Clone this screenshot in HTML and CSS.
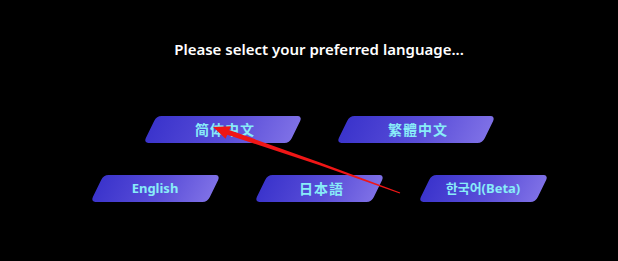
FILE: index.html
```html
<!DOCTYPE html>
<html>
<head>
<meta charset="utf-8">
<link rel="stylesheet" href="styles.css">
</head>
<body>
<div class="page">
	<div class="title">Please select your preferred language...</div>
	<div class="row">
		<div class="lang wide zh">简体中文</div>
		<div class="lang wide zh">繁體中文</div>
	</div>
	<div class="row second">
		<div class="lang">English</div>
		<div class="lang zh">日本語</div>
		<div class="lang">한국어(Beta)</div>
	</div>
	<svg class="arrow" width="618" height="261" viewBox="0 0 618 261">
		<polygon points="213,127 231,126.2 229.2,130 320,162.6 400.2,192.6 399.8,193.4 319,165 227.2,134.8 225.6,138.8" fill="#f01616"/>
	</svg>
</div>
</body>
</html>
```

FILE: styles.css
```css
body
{
	margin: 0;
	background: #000;
	font-family: "Noto Sans", "Noto Sans CJK KR", sans-serif;
}

.page
{
	position: relative;
	width: 618px;
	height: 261px;
	padding-left: 20px;
	box-sizing: border-box;
}

.title
{
	padding-top: 38px;
	text-align: center;
	color: #fff;
	font-size: 15px;
	font-weight: 600;
	line-height: 22px;
}

.row
{
	position: relative;
	z-index: 0;
	display: flex;
	justify-content: center;
	gap: 47px;
	margin-top: 56px;
}

.row.second
{
	margin-top: 32px;
}

.lang
{
	position: relative;
	width: 117px;
	height: 27px;
	line-height: 27px;
	text-align: center;
	color: #88ecf8;
	font-size: 13px;
	font-weight: 700;
}

.lang.wide
{
	width: 146px;
}

.lang.zh
{
	font-family: "Noto Sans CJK SC", sans-serif;
	font-size: 14px;
	letter-spacing: 1px;
	text-indent: 5px;
}

.lang::before
{
	content: "";
	position: absolute;
	inset: 0;
	z-index: -1;
	border-radius: 5px;
	transform: skewX(-26deg);
	background: linear-gradient(90deg, #3b34cc 0%, #5a4ed8 55%, #7e70e6 100%);
}

.arrow
{
	position: absolute;
	left: 0;
	top: 0;
	z-index: 2;
}
```
